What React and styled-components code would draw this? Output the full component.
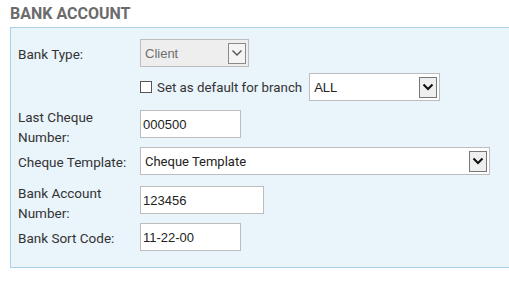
import React from 'react';
import styled, { createGlobalStyle } from 'styled-components';

const Global = createGlobalStyle`
  html, body {
    margin: 0;
    padding: 0;
    background: #fff;
    overflow: hidden;
  }
`;

const Page = styled.div`
  padding: 6px 0 0 10px;
  font-family: Roboto, "Liberation Sans", sans-serif;
`;

const Title = styled.h2`
  margin: 0 0 5px 0;
  font-size: 16px;
  line-height: 16px;
  font-weight: 700;
  color: #6b6b6b;
`;

const Panel = styled.div`
  width: 520px;
  height: 241px;
  box-sizing: border-box;
  background: #eaf4fb;
  border: 1px solid #a9d2ea;
  padding: 11px 0 0 7px;
  display: flex;
  flex-direction: column;
`;

const Row = styled.div`
  display: flex;
  align-items: center;
  height: 28px;
  flex-shrink: 0;
  margin-bottom: ${(p) => p.$gap || 0}px;
`;

const Label = styled.div`
  width: 122px;
  flex-shrink: 0;
  font-size: 13.5px;
  line-height: 20px;
  color: #333;
  margin-top: ${(p) => (p.$twoLine ? 5 : 1)}px;
`;

const Field = styled.div`
  display: flex;
  align-items: center;
  gap: 7px;
`;

const Input = styled.div`
  box-sizing: border-box;
  width: ${(p) => p.$w}px;
  height: 28px;
  background: #fff;
  border: 1px solid #bdbdbd;
  padding: 0 2px;
  display: flex;
  align-items: center;
  font-family: "Liberation Sans", Arial, sans-serif;
  font-size: 13px;
  color: #222;
`;

const Select = styled.div`
  box-sizing: border-box;
  width: ${(p) => p.$w}px;
  height: 28px;
  background: ${(p) => (p.$disabled ? '#eeeeee' : '#fff')};
  border: 1px solid #bdbdbd;
  padding: 0 2px 0 4px;
  display: flex;
  align-items: center;
  justify-content: space-between;
  font-family: ${(p) => (p.$roboto ? 'Roboto, sans-serif' : '"Liberation Sans", Arial, sans-serif')};
  font-size: 13px;
  color: ${(p) => (p.$disabled ? '#6d6d6d' : '#222')};
`;

const Arrow = styled.div`
  box-sizing: border-box;
  width: 18px;
  height: 21px;
  border: 1px solid ${(p) => (p.$disabled ? '#8a8a8a' : '#777')};
  background: ${(p) => (p.$disabled ? '#f4f4f4' : '#efefef')};
  display: flex;
  align-items: center;
  justify-content: center;
`;

const Check = styled.div`
  box-sizing: border-box;
  width: 12px;
  height: 12px;
  border: 1px solid #555;
  background: #fff;
`;

const CheckLabel = styled.span`
  font-size: 13.3px;
  color: #333;
  margin-left: -2px;
`;

function Chevron({ disabled }) {
  return (
    <svg width="12" height="8" viewBox="0 0 12 8">
      <path
        d="M1.5 1.5 L6 6 L10.5 1.5"
        fill="none"
        stroke={disabled ? '#555' : '#111'}
        strokeWidth={disabled ? 1.4 : 2}
      />
    </svg>
  );
}

function Drop({ value, w, disabled, roboto }) {
  return (
    <Select $w={w} $disabled={disabled} $roboto={roboto}>
      <span>{value}</span>
      <Arrow $disabled={disabled}>
        <Chevron disabled={disabled} />
      </Arrow>
    </Select>
  );
}

export default function App() {
  return (
    <Page>
      <Global />
      <Title>BANK ACCOUNT</Title>
      <Panel>
        <Row $gap={6}>
          <Label>Bank Type:</Label>
          <Field>
            <Drop value="Client" w={109} disabled />
          </Field>
        </Row>
        <Row $gap={9}>
          <Label />
          <Field>
            <Check />
            <CheckLabel>Set as default for branch</CheckLabel>
            <Drop value="ALL" w={131} />
          </Field>
        </Row>
        <Row $gap={9}>
          <Label $twoLine>
            Last Cheque
            <br />
            Number:
          </Label>
          <Field>
            <Input $w={101}>000500</Input>
          </Field>
        </Row>
        <Row $gap={11}>
          <Label>Cheque Template:</Label>
          <Field>
            <Drop value="Cheque Template" w={350} roboto />
          </Field>
        </Row>
        <Row $gap={9}>
          <Label $twoLine>
            Bank Account
            <br />
            Number:
          </Label>
          <Field>
            <Input $w={124}>123456</Input>
          </Field>
        </Row>
        <Row>
          <Label>Bank Sort Code:</Label>
          <Field>
            <Input $w={101}>11-22-00</Input>
          </Field>
        </Row>
      </Panel>
    </Page>
  );
}
